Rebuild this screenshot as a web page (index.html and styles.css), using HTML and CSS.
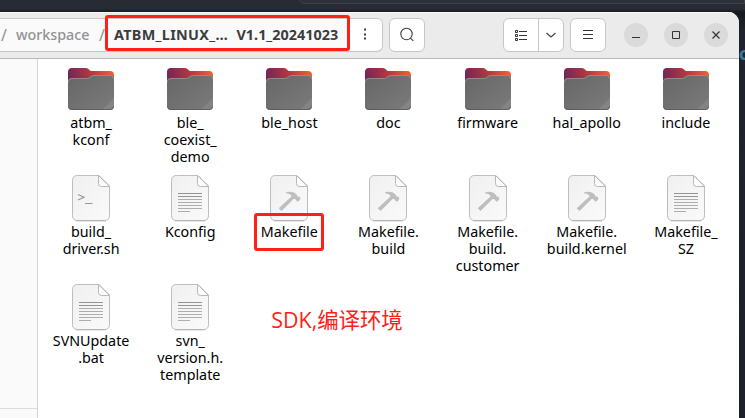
FILE: index.html
```
<!DOCTYPE html>
<html lang="en">
<head>
<meta charset="utf-8">
<title>Files</title>
<link rel="stylesheet" href="styles.css">
</head>
<body>
<svg class="defs" aria-hidden="true">
  <defs>
    <linearGradient id="back" gradientUnits="userSpaceOnUse" x1="1" x2="47" y1="17" y2="6">
      <stop offset="0" stop-color="#6f2458"/><stop offset=".28" stop-color="#90304c"/><stop offset=".55" stop-color="#b43c3e"/><stop offset="1" stop-color="#f46429"/>
    </linearGradient>
    <linearGradient id="front" x1="0" x2="1" y1="0" y2="1">
      <stop offset="0" stop-color="#666"/><stop offset="1" stop-color="#7b7b7b"/>
    </linearGradient>
    <linearGradient id="paper" x1="0" x2="1" y1="0" y2="1">
      <stop offset="0" stop-color="#f0f0f0"/><stop offset="1" stop-color="#fafafa"/>
    </linearGradient>
    <symbol id="folder" viewBox="0 0 48 48">
      <path d="M1 19V7q0-4 4-4h14q2 0 3 1.500t3 1.500h18q4 0 4 4v10z" fill="url(#back)"/>
      <path d="M1 41V17q0-4 4-4h15.500q1.500 0 3-1.500t3-1.500H43q4 0 4 4v27q0 4-4 4H5q-4 0-4-4z" fill="url(#front)"/>
      <path d="M47 33v8q0 4-4 4h-8z" fill="#888" opacity=".75"/>
      <path d="M1.300 17q0-3.500 3.700-3.500h15.500q1.500 0 3-1.500t3-1.500H43q3.700 0 3.700 3.500" fill="none" stroke="#989390" stroke-width=".8"/>
      <path d="M1.500 41.500q.5 3 3.500 3h38q3 0 3.500-3" fill="none" stroke="#585858" stroke-width=".8"/>
    </symbol>
    <symbol id="sheet" viewBox="0 0 48 48">
      <path d="M10.500 1.500H32L42.500 12v29.500q0 5-5 5h-27q-5 0-5-5v-35q0-5 5-5z" fill="url(#paper)" stroke="#bdbdbd"/>
      <path d="M31.500 1.500v8q0 3 3 3h8z" fill="#fcfcfc" stroke="#b8b8b8"/>
      <path d="M9 46.900h30" stroke="#aaa" stroke-width=".7"/>
    </symbol>
    <symbol id="text" viewBox="0 0 48 48">
      <use href="#sheet"/>
      <path d="M12 19.500h24M12 22.500h24" stroke="#949494"/>
      <path d="M12 25.500h24M12 28.500h24M12 31.500h24M12 34.500h24M12 37.500h12" stroke="#adadad"/>
    </symbol>
    <symbol id="shell" viewBox="0 0 48 48">
      <use href="#sheet"/>
      <path d="M11 20.500l6 2.700-6 2.800M18 29.500h7.500" fill="none" stroke="#999" stroke-width="1.200"/>
    </symbol>
    <symbol id="make" viewBox="0 0 48 48">
      <use href="#sheet"/>
      <path d="M21 18.500q4-1.400 8.500.2l2.500 2.200.7 1.800 1.600-.2 1.200 2-1.500 2.500-1.500.7-2.500-2.800-1.500.1L16.500 37l-2.800-2.700L26.500 22.500q-.5-2.700-5.500-3.200z" fill="#bebebe"/>
    </symbol>
  </defs>
</svg>
<div class="desktop">
  <div class="backdrop"></div>
  <span class="stray">c</span>
  <main class="window">
    <header class="toolbar">
      <nav class="path">
        <span class="slash">/</span><span class="crumb">workspace</span><span class="slash">/</span>
        <strong class="current"><span class="name">ATBM_LINUX_…</span><span class="version">V1.1_20241023</span></strong>
        <button class="more" aria-label="More"><svg width="5" height="13"><path d="M1 1.500h2M1 6.500h2M1 10.500h2" stroke="#3d3d3d" stroke-width="2"/></svg></button>
        <i class="mark mark-path"></i>
      </nav>
      <button class="btn search" aria-label="Search"><svg width="16" height="16" fill="none" stroke="#3d3d3d" stroke-width="1.100"><circle cx="7.500" cy="7" r="5.700"/><path d="M11.500 11.200l2.800 2.700"/></svg></button>
      <div class="btn split">
        <button class="list" aria-label="List"><svg width="14" height="14" fill="none" stroke="#333"><path d="M1.500 2.500h2v2h-2zM1.500 6.500h2v2h-2zM1.500 10.500h2v2h-2zM5 3.500h8M5 7.500h8M5 11.500h8"/></svg></button>
        <button class="drop" aria-label="View options"><svg width="12" height="8" fill="none" stroke="#444" stroke-width="1.200"><path d="M1.500 2l4.500 4 4.500-4"/></svg></button>
      </div>
      <button class="btn menu" aria-label="Menu"><svg width="12" height="12" stroke="#333"><path d="M1 1.500h10M1 5.500h10M1 9.500h10"/></svg></button>
      <div class="controls">
        <button aria-label="Minimize"><svg width="10" height="10" stroke="#333"><path d="M1 7.500h8"/></svg></button>
        <button aria-label="Maximize"><svg width="10" height="10" fill="none" stroke="#333"><path d="M1.500 1.500h7v7h-7z"/></svg></button>
        <button aria-label="Close"><svg width="10" height="10" stroke="#333" stroke-width="1.200"><path d="M1.500 1.500l7 7M8.500 1.500l-7 7"/></svg></button>
      </div>
    </header>
    <div class="body">
      <aside class="sidebar"><div class="places"></div></aside>
      <section class="files">
        <div class="file"><svg><use href="#folder"/></svg><p>atbm_<br>kconf</p></div>
        <div class="file"><svg><use href="#folder"/></svg><p>ble_<br>coexist_<br>demo</p></div>
        <div class="file"><svg><use href="#folder"/></svg><p>ble_host</p></div>
        <div class="file"><svg><use href="#folder"/></svg><p>doc</p></div>
        <div class="file"><svg><use href="#folder"/></svg><p>firmware</p></div>
        <div class="file"><svg><use href="#folder"/></svg><p>hal_apollo</p></div>
        <div class="file"><svg><use href="#folder"/></svg><p>include</p></div>
        <div class="file"><svg><use href="#shell"/></svg><p>build_<br>driver.sh</p></div>
        <div class="file"><svg><use href="#text"/></svg><p>Kconfig</p></div>
        <div class="file"><svg><use href="#make"/></svg><p>Makefile</p><i class="mark mark-file"></i></div>
        <div class="file"><svg><use href="#make"/></svg><p>Makefile.<br>build</p></div>
        <div class="file"><svg><use href="#make"/></svg><p>Makefile.<br>build.<br>customer</p></div>
        <div class="file"><svg><use href="#make"/></svg><p>Makefile.<br>build.kernel</p></div>
        <div class="file"><svg><use href="#text"/></svg><p>Makefile_<br>SZ</p></div>
        <div class="file"><svg><use href="#text"/></svg><p>SVNUpdate<br>.bat</p></div>
        <div class="file"><svg><use href="#text"/></svg><p>svn_<br>version.h.<br>template</p></div>
        <div class="note">SDK,编译环境</div>
      </section>
    </div>
  </main>
</div>
</body>
</html>
```
FILE: styles.css
```
* { box-sizing: border-box; }
body { margin: 0; font-family: "Noto Sans", "Noto Sans CJK SC", sans-serif; font-size: 14.3px; color: #000; }
button { border: 0; background: none; padding: 0; display: flex; align-items: center; justify-content: center; }
svg { display: block; flex: none; }
.defs { position: absolute; width: 0; height: 0; }
.desktop { position: relative; width: 745px; height: 418px; overflow: hidden; padding-top: 12px; background: linear-gradient(#272b34 0, #272b34 9px, #16191e 12px, #20232c 30px, #1d2029 100%); }
.backdrop { position: absolute; left: 299px; right: 0; top: -8px; height: 12px; border: 1px solid #3c414b; border-radius: 0 0 0 5px; background: #2c3039; }
.stray { position: absolute; left: 739px; top: 44px; font: bold 17px/20px "Noto Sans", sans-serif; color: #3e7895; }
.window { position: relative; width: 739px; height: 406px; display: flex; flex-direction: column; background: #fff; border-radius: 0 11px 0 0; overflow: hidden; }
.toolbar { height: 47px; flex: none; display: flex; align-items: flex-start; padding-top: 5px; background: #ebebeb; border-top: 1px solid #fafafa; border-bottom: 1px solid #b9b9b9; }
.path { position: relative; width: 383px; height: 34px; display: flex; align-items: center; background: #fafafa; border: 1px solid #c6c6c6; border-left: 0; border-radius: 0 6px 6px 0; line-height: 20px; padding-bottom: 1px; }
.slash { color: #929292; width: 16px; font-size: 16px; padding-left: 1px; }
.crumb { color: #929292; font-weight: 500; width: 82px; }
.current { display: flex; color: #3d3d3d; font-weight: 700; width: 235px; font-size: 14.400px; }
.name { width: 122.500px; letter-spacing: .3px; }
.more { flex: 1; height: 100%; background: #fff; border-radius: 0 5px 5px 0; }
.mark { position: absolute; border: 3px solid #ff2015; border-radius: 3px; }
.mark-path { left: 105px; top: -4px; width: 245px; height: 36px; }
.btn { height: 34px; background: #fff; border: 1px solid #c6c6c6; border-radius: 6px; display: flex; }
.search { width: 36px; margin-left: 6px; }
.split { width: 61px; margin-left: 78px; }
.list { width: 35px; border-right: 1px solid #c6c6c6; }
.drop { flex: 1; }
.menu { width: 36px; margin-left: 6px; }
.controls { display: flex; gap: 16px; margin: 5px 0 0 18px; }
.controls button { width: 24px; height: 24px; border-radius: 50%; background: #dadada; }
.body { flex: 1; display: flex; }
.sidebar { width: 38px; background: #fafafa; border-right: 1px solid #d5d5d5; }
.places { height: 350px; border-bottom: 1px solid #dcdcdc; }
.files { flex: 1; display: grid; grid-template-columns: repeat(7, 99.150px); grid-auto-rows: 109px; padding: 6px 0 0 3.500px; align-content: start; }
.file { position: relative; display: flex; flex-direction: column; align-items: center; }
.file svg { width: 48px; height: 48px; }
.file p { margin: 1px 0 0; line-height: 17px; text-align: center; white-space: nowrap; }
.mark-file { left: 14px; top: 39px; width: 70px; height: 38px; }
.note { grid-column: 3 / span 2; padding: 24px 0 0 31.500px; font: 400 21.400px/26px "Open Sans", "Noto Sans CJK SC", sans-serif; color: #ff2015; white-space: nowrap; }
```
